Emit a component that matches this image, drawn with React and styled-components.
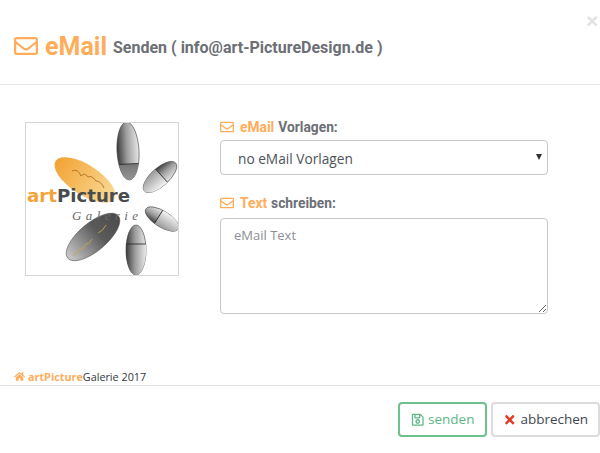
import React from 'react'
import styled, { createGlobalStyle } from 'styled-components'
import { FaRegEnvelope, FaHome, FaRegSave, FaTimes } from 'react-icons/fa'

const orange = '#ffad5a'
const grey = '#6c6f75'

const GlobalStyle = createGlobalStyle`
  html, body {
    margin: 0;
    background: #fff;
    font-family: "Open Sans", "Liberation Sans", sans-serif;
    color: #333;
  }
  * { box-sizing: border-box; }
`

const Modal = styled.div`
  position: relative;
  width: 600px;
  height: 453px;
  display: flex;
  flex-direction: column;
  overflow: hidden;
`

const Header = styled.header`
  height: 85px;
  flex: none;
  border-bottom: 1px solid #e9e9e9;
  padding: 8px 0 0 14px;
  display: flex;
  align-items: center;
  font-family: Roboto, "Liberation Sans", sans-serif;
  font-weight: 700;
`

const BigIcon = styled(FaRegEnvelope)`
  color: ${orange};
  font-size: 24px;
  margin-right: 7px;
`

const BigWord = styled.span`
  color: ${orange};
  font-size: 25px;
  margin-right: 7px;
`

const SubWord = styled.span`
  color: ${grey};
  font-size: 16px;
  margin: 3px 0 0 -1px;
`

const CloseMark = styled.span`
  position: absolute;
  top: 11px;
  left: 586px;
  font-family: "Liberation Sans", sans-serif;
  font-weight: 700;
  font-size: 21px;
  line-height: 20px;
  color: #e2e2e2;
`

const Body = styled.main`
  flex: 1;
  display: flex;
  align-items: flex-start;
  padding: 33px 52px 0 25px;
  gap: 41px;
`

const LogoBox = styled.div`
  flex: none;
  width: 154px;
  height: 154px;
  margin-top: 4px;
  border: 1px solid #d6d6d6;
  background: #fff;
  svg { display: block; }
`

const Form = styled.form`
  flex: 1;
  display: flex;
  flex-direction: column;
`

const Label = styled.label`
  display: flex;
  align-items: center;
  height: 18px;
  margin-top: ${props => props.$top || 0}px;
  font-family: Roboto, "Liberation Sans", sans-serif;
  font-weight: 700;
  font-size: 13.8px;
  color: ${grey};
`

const LabelIcon = styled(FaRegEnvelope)`
  color: ${orange};
  font-size: 14px;
  margin-right: 6px;
`

const Accent = styled.span`
  color: ${orange};
  margin-right: 4px;
`

const SelectBox = styled.div`
  height: 35px;
  margin-top: 4px;
  border: 1px solid #c6c8cb;
  border-radius: 4px;
  display: flex;
  align-items: center;
  justify-content: space-between;
  padding: 1px 5px 0 17px;
  font-size: 13.7px;
  color: #4d5257;
`

const Caret = styled.span`
  width: 0;
  height: 0;
  margin-top: -3px;
  border-left: 3.5px solid transparent;
  border-right: 3.5px solid transparent;
  border-top: 6px solid #333;
`

const TextArea = styled.textarea`
  display: block;
  width: 100%;
  height: 96px;
  margin-top: 6px;
  padding: 7px 13px;
  border: 1px solid #c6c8cb;
  border-radius: 4px;
  outline: none;
  font-family: "Open Sans", "Liberation Sans", sans-serif;
  font-size: 13px;
  color: #4d5257;
  &::placeholder {
    color: #8b8f94;
    opacity: 1;
  }
`

const Credit = styled.div`
  flex: none;
  height: 20px;
  padding: 2px 0 0 14px;
  display: flex;
  align-items: center;
  font-size: 10.8px;
  color: #33383d;
`

const CreditIcon = styled(FaHome)`
  color: ${orange};
  font-size: 11px;
  margin-right: 3px;
`

const CreditAccent = styled.b`
  color: ${orange};
  font-weight: 700;
`

const Footer = styled.footer`
  flex: none;
  height: 68px;
  border-top: 1px solid #e4e4e4;
  display: flex;
  justify-content: flex-end;
  align-items: flex-start;
  gap: 4px;
  padding-top: 16px;
`

const Button = styled.button`
  height: 35px;
  width: ${props => props.$width}px;
  display: flex;
  align-items: center;
  justify-content: center;
  gap: 4px;
  background: #fff;
  border: 2px solid ${props => props.$border};
  border-radius: 4px;
  color: ${props => props.$color};
  font-family: "Open Sans", "Liberation Sans", sans-serif;
  font-size: 13.5px;
  padding: 0 0 2px;
  svg { margin-top: 2px; }
`

// one petal of the logo, drawn upright and then turned into place
const Petal = ({ id, x, y, rx, ry, angle, fill, cut, band }) => (
  <g transform={`translate(${x} ${y}) rotate(${angle})`}>
    <clipPath id={id}>
      <ellipse rx={rx} ry={ry} />
    </clipPath>
    <ellipse rx={rx} ry={ry} fill={fill} stroke="#3a3a3a" strokeWidth="0.6" />
    <rect x={-rx} y={cut} width={rx * 2} height={ry * 2} fill={band} clipPath={`url(#${id})`} />
    <line x1={-rx} y1={cut} x2={rx} y2={cut} stroke="#222" strokeWidth="0.8" clipPath={`url(#${id})`} />
  </g>
)

const Logo = () => (
  <svg width="152" height="152" viewBox="0 0 152 152">
    <defs>
      <linearGradient id="steel" x1="0" y1="0" x2="1" y2="0">
        <stop offset="0" stopColor="#3a3a3a" />
        <stop offset="0.45" stopColor="#9c9c9c" />
        <stop offset="1" stopColor="#e8e8e8" />
      </linearGradient>
      <linearGradient id="steelDown" x1="0" y1="0" x2="0" y2="1">
        <stop offset="0" stopColor="#777" />
        <stop offset="1" stopColor="#dedede" />
      </linearGradient>
      <linearGradient id="pale" x1="0" y1="0" x2="1" y2="0">
        <stop offset="0" stopColor="#9a9a9a" />
        <stop offset="1" stopColor="#f3f3f3" />
      </linearGradient>
      <linearGradient id="dark" x1="0" y1="0" x2="0" y2="1">
        <stop offset="0" stopColor="#4b4b4b" />
        <stop offset="0.4" stopColor="#5a5a5a" />
        <stop offset="1" stopColor="#c9c9c9" />
      </linearGradient>
      <linearGradient id="amber" x1="0" y1="0" x2="0" y2="1">
        <stop offset="0" stopColor="#f3a233" />
        <stop offset="1" stopColor="#f8dc9a" />
      </linearGradient>
    </defs>
    <Petal id="p1" x={102} y={28} rx={11} ry={29} angle={-3} fill="url(#steel)" cut={13} band="url(#steelDown)" />
    <Petal id="p2" x={134} y={54} rx={9} ry={21} angle={48} fill="url(#steel)" cut={-2} band="url(#pale)" />
    <Petal id="p3" x={136} y={96} rx={8} ry={19} angle={-58} fill="url(#steel)" cut={-4} band="url(#pale)" />
    <Petal id="p4" x={110} y={127} rx={10} ry={25} angle={0} fill="url(#steel)" cut={-6} band="url(#steel)" />
    <ellipse cx="59" cy="57" rx="15" ry="35" transform="rotate(-57 59 57)" fill="url(#amber)" />
    <ellipse cx="67" cy="114" rx="14" ry="33" transform="rotate(50 67 114)" fill="url(#dark)" stroke="#444" strokeWidth="0.5" />
    <path d="M46 48 q6 -3 9 5 q4 -4 7 1 q4 -2 8 4 q5 0 8 7" fill="none" stroke="#a8671c" strokeWidth="0.8" />
    <path d="M47 132 q5 -2 7 -6 q4 0 6 -5 q4 0 6 -5 M72 110 q5 -2 8 -8" fill="none" stroke="#c9a24a" strokeWidth="0.9" />
    <text x="1" y="79" textLength="30" lengthAdjust="spacingAndGlyphs" fontFamily="DejaVu Sans, sans-serif" fontWeight="700" fontSize="17" fill="#f2a33a">art</text>
    <text x="31" y="79" textLength="73" lengthAdjust="spacingAndGlyphs" fontFamily="DejaVu Sans, sans-serif" fontWeight="700" fontSize="17" fill="#4c4c4c">Picture</text>
    <text x="46" y="97" textLength="66" fontFamily="Liberation Serif, serif" fontStyle="italic" fontSize="13" fill="#6a6a6a">Galerie</text>
  </svg>
)

const App = () => (
  <Modal>
    <GlobalStyle />
    <Header>
      <BigIcon />
      <BigWord>eMail</BigWord>
      <SubWord>Senden ( info@art-PictureDesign.de )</SubWord>
    </Header>
    <CloseMark>×</CloseMark>
    <Body>
      <LogoBox>
        <Logo />
      </LogoBox>
      <Form>
        <Label>
          <LabelIcon />
          <Accent>eMail</Accent> Vorlagen:
        </Label>
        <SelectBox>
          no eMail Vorlagen
          <Caret />
        </SelectBox>
        <Label $top={19}>
          <LabelIcon />
          <Accent>Text</Accent> schreiben:
        </Label>
        <TextArea placeholder="eMail Text" />
      </Form>
    </Body>
    <Credit>
      <CreditIcon />
      <CreditAccent>artPicture</CreditAccent>Galerie 2017
    </Credit>
    <Footer>
      <Button $width={89} $border="#6cc18f" $color="#5cb885">
        <FaRegSave /> senden
      </Button>
      <Button $width={109} $border="#dcdcdc" $color="#3f4650">
        <FaTimes color="#e03b24" /> abbrechen
      </Button>
    </Footer>
  </Modal>
)

export default App
